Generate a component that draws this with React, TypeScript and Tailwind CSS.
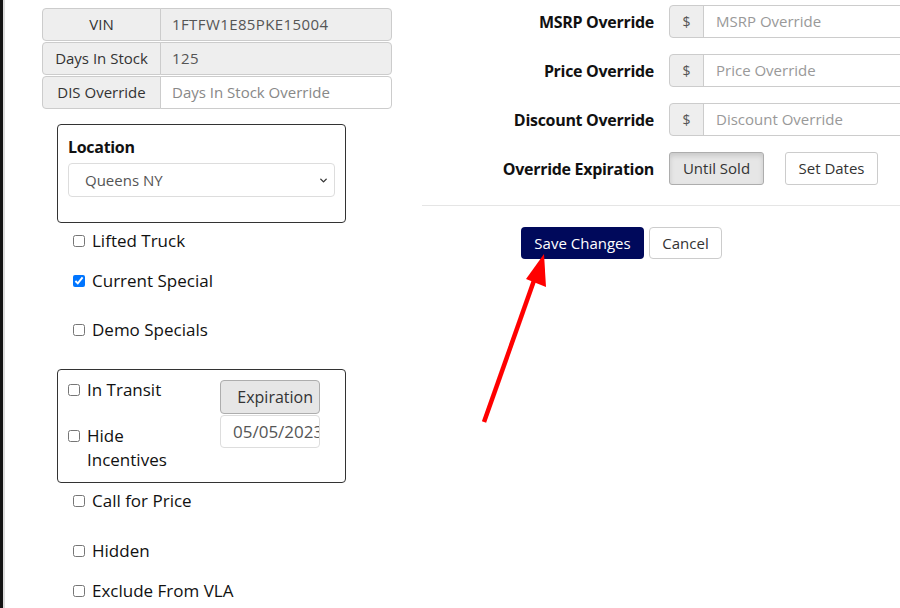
import React from 'react';
import { ChevronDown } from 'lucide-react';

const font = { fontFamily: '"Open Sans", "Liberation Sans", sans-serif' };

const Check = ({ label, checked = false, className = '' }: { label: React.ReactNode; checked?: boolean; className?: string }) => (
  <label className={`flex items-start gap-[7px] text-[17px] text-[#111] ${className}`}>
    <input type="checkbox" defaultChecked={checked} className="mt-[6px] h-[12px] w-[12px] shrink-0 accent-[#0075ff]" />
    <span className="leading-[24px]">{label}</span>
  </label>
);

const InfoRow = ({ label, value, placeholder, readOnly }: { label: string; value?: string; placeholder?: string; readOnly?: boolean }) => (
  <div className="flex h-[33px] text-[15px]">
    <div className="flex w-[119px] items-center justify-center rounded-l-[4px] border border-[#ccc] bg-[#eee] text-[#333]">{label}</div>
    <input
      readOnly={readOnly}
      defaultValue={value}
      placeholder={placeholder}
      className={`-ml-px min-w-0 flex-1 rounded-r-[4px] border border-[#ccc] px-[11px] text-[#555] outline-none placeholder:text-[#888] ${readOnly ? 'bg-[#eee] tracking-[0.4px]' : 'bg-white'}`}
    />
  </div>
);

const MoneyRow = ({ label, placeholder }: { label: string; placeholder: string }) => (
  <>
    <div className="flex h-[33px] items-center justify-end text-[16px] font-bold tracking-[-0.3px] text-[#111]">{label}</div>
    <div className="flex h-[33px]">
      <div className="flex w-[35px] items-center justify-center rounded-l-[4px] border border-[#ccc] bg-[#eee] text-[14px] text-[#555]">$</div>
      <input placeholder={placeholder} className="-ml-px min-w-0 flex-1 border border-r-0 border-[#ccc] bg-white px-[12px] text-[15px] outline-none placeholder:text-[#999]" />
    </div>
  </>
);

export default function App() {
  return (
    <div className="relative flex h-[608px] w-[900px] overflow-hidden bg-white" style={font}>
      <div className="w-[3px] shrink-0 bg-[#141414]" />
      <div className="w-[2px] shrink-0 bg-[#dcdcdc]" />

      {/* left column */}
      <div className="w-[417px] shrink-0 pt-[8px]">
        <div className="ml-[37px] mr-[30px] flex flex-col gap-px">
          <InfoRow label="VIN" value="1FTFW1E85PKE15004" readOnly />
          <InfoRow label="Days In Stock" value="125" readOnly />
          <InfoRow label="DIS Override" placeholder="Days In Stock Override" />
        </div>

        <div className="ml-[52px] mt-[15px] h-[99px] w-[289px] rounded-[4px] border border-[#333] px-[10px] pt-[10px]">
          <div className="text-[16px] font-bold leading-[24px] tracking-[-0.3px] text-[#111]">Location</div>
          <div className="relative mt-[4px] h-[34px]">
            <select className="h-full w-full appearance-none rounded-[4px] border border-[#ddd] bg-white pl-[16px] text-[15px] text-[#555] outline-none">
              <option>Queens NY</option>
            </select>
            <ChevronDown className="pointer-events-none absolute right-[6px] top-[12px] h-[11px] w-[11px] text-[#333]" strokeWidth={3} />
          </div>
        </div>

        <div className="ml-[68px] mt-[6px] flex flex-col">
          <Check label="Lifted Truck" />
          <Check label="Current Special" checked className="mt-[16px]" />
          <Check label="Demo Specials" className="mt-[25px]" />
        </div>

        <div className="ml-[52px] mt-[27px] flex h-[114px] w-[289px] rounded-[4px] border border-[#333] pl-[10px] pt-[8px]">
          <div className="flex w-[152px] flex-col">
            <Check label="In Transit" />
            <Check label={<>Hide<br />Incentives</>} className="mt-[22px]" />
          </div>
          <div className="flex flex-col pt-[2px]">
            <div className="flex h-[34px] w-[100px] items-center justify-end rounded-[4px] border border-[#adadad] bg-[#e6e6e6] pr-[6px] text-[16px] text-[#333]">Expiration</div>
            <input defaultValue="05/05/2023" className="mt-px h-[33px] w-[100px] rounded-[4px] border border-[#ddd] bg-white pl-[12px] text-[17px] text-[#555] outline-none" />
          </div>
        </div>

        <div className="ml-[68px] mt-[6px] flex flex-col">
          <Check label="Call for Price" />
          <Check label="Hidden" className="mt-[26px]" />
          <Check label="Exclude From VLA" className="mt-[16px]" />
        </div>
      </div>

      {/* right column */}
      <div className="flex-1 pt-[5px]">
        <div className="grid grid-cols-[232px_1fr] gap-x-[15px] gap-y-[16px]">
          <MoneyRow label="MSRP Override" placeholder="MSRP Override" />
          <MoneyRow label="Price Override" placeholder="Price Override" />
          <MoneyRow label="Discount Override" placeholder="Discount Override" />
          <div className="flex h-[33px] items-center justify-end text-[16px] font-bold tracking-[-0.3px] text-[#111]">Override Expiration</div>
          <div className="flex h-[33px] gap-[21px]">
            <button className="w-[95px] rounded-[3px] border border-[#adadad] bg-[#e6e6e6] text-[15px] text-[#333] shadow-[inset_0_3px_5px_rgba(0,0,0,0.125)]">Until Sold</button>
            <button className="w-[93px] rounded-[3px] border border-[#ccc] bg-white text-[15px] text-[#333]">Set Dates</button>
          </div>
        </div>
        <div className="mt-[20px] h-px bg-[#e5e5e5]" />
        <div className="ml-[99px] mt-[21px] flex gap-[5px]">
          <button className="h-[32px] w-[123px] rounded-[4px] bg-[#00095b] text-[15px] text-white">Save Changes</button>
          <button className="h-[32px] w-[73px] rounded-[4px] border border-[#ccc] bg-white text-[15px] text-[#333]">Cancel</button>
        </div>
      </div>

      {/* annotation arrow */}
      <svg className="pointer-events-none absolute left-0 top-0" width="900" height="608">
        <line x1="484" y1="422" x2="537" y2="272" stroke="#ff0000" strokeWidth="4.5" />
        <polygon points="544,254 546,287 526,279" fill="#ff0000" />
      </svg>
    </div>
  );
}
